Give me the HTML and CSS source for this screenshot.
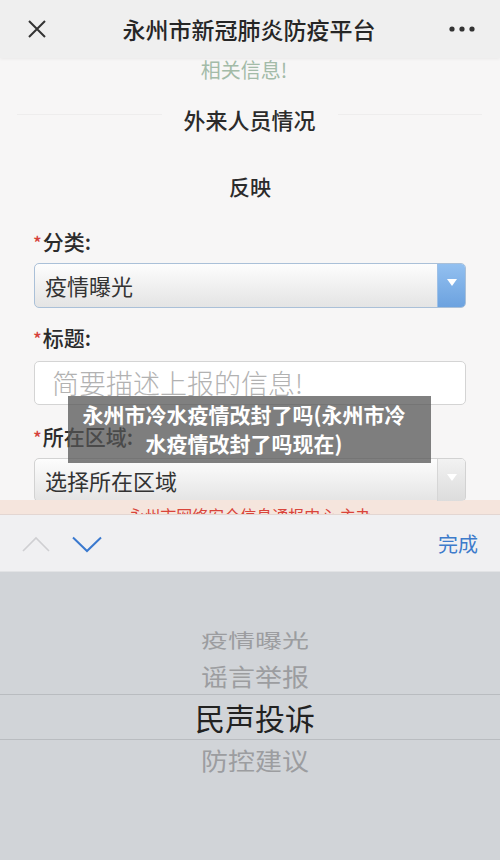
FILE: index.html
```html
<!DOCTYPE html>
<html lang="zh-CN">
<head>
    <meta charset="UTF-8">
    <meta name="viewport" content="width=device-width, initial-scale=1.0">
    <title>永州市新冠肺炎防疫平台</title>
    <link rel="stylesheet" href="styles.css">
</head>
<body>
<div class="page">
    <div class="topbar">
        <svg class="close-icon" width="20" height="20" viewBox="0 0 20 20">
            <path d="M2 2 L18 18 M18 2 L2 18" stroke="#333" stroke-width="2" fill="none"/>
        </svg>
        <div class="topbar-title">永州市新冠肺炎防疫平台</div>
        <svg class="more-icon" width="26" height="6" viewBox="0 0 26 6">
            <circle cx="3" cy="3" r="2.6" fill="#333"/>
            <circle cx="13" cy="3" r="2.6" fill="#333"/>
            <circle cx="23" cy="3" r="2.6" fill="#333"/>
        </svg>
    </div>

    <div class="content">
        <div class="notice">相关信息!</div>
        <div class="section-title"><span>外来人员情况</span></div>
        <div class="sub-title">反映</div>

        <div class="field-label"><span class="star">*</span>分类:</div>
        <div class="select select-active">
            <span class="select-text">疫情曝光</span>
            <span class="select-btn"><span class="arrow"></span></span>
        </div>

        <div class="field-label label-title"><span class="star">*</span>标题:</div>
        <div class="text-input">简要描述上报的信息!</div>

        <div class="field-label label-area"><span class="star">*</span>所在区域:</div>
        <div class="select">
            <span class="select-text">选择所在区域</span>
            <span class="select-btn"><span class="arrow"></span></span>
        </div>

        <div class="footer-note">永州市网络安全信息通报中心 主办</div>
    </div>

    <div class="toolbar">
        <div class="nav-arrows">
            <svg width="28" height="16" viewBox="0 0 28 16">
                <path d="M1 15 L14 2 L27 15" stroke="#cfcfd2" stroke-width="1.6" fill="none"/>
            </svg>
            <svg width="30" height="17" viewBox="0 0 30 17">
                <path d="M1 1.5 L15 15 L29 1.5" stroke="#3a79cf" stroke-width="2" fill="none"/>
            </svg>
        </div>
        <div class="done">完成</div>
    </div>

    <div class="picker">
        <div class="pick-item far">疫情曝光</div>
        <div class="pick-item near">谣言举报</div>
        <div class="pick-item selected">民声投诉</div>
        <div class="pick-item below">防控建议</div>
    </div>

    <div class="overlay-title">永州市冷水疫情改封了吗(永州市冷水疫情改封了吗现在)</div>
</div>
</body>
</html>
```

FILE: styles.css
```css
body {
    margin: 0;
    padding: 0;
    font-family: "Noto Sans CJK SC", "Noto Sans", sans-serif;
    background-color: #f7f6f6;
}

.page {
    position: relative;
    width: 500px;
    height: 860px;
    overflow: hidden;
}

.topbar {
    height: 58px;
    display: flex;
    align-items: center;
    justify-content: space-between;
    padding: 0 25px 0 27px;
    background-color: #efefef;
    box-shadow: 0 1px 3px rgba(0, 0, 0, 0.06);
    position: relative;
    z-index: 1;
}

.topbar-title {
    font-size: 23px;
    font-weight: 500;
    color: #262626;
    margin-left: 2px;
}

.content {
    height: 456px;
    overflow: hidden;
    background-color: #f7f6f6;
}

.notice {
    height: 24px;
    line-height: 24px;
    font-size: 20px;
    text-align: center;
    color: #a3bba8;
    margin-left: -12px;
}

.section-title {
    display: flex;
    align-items: center;
    margin: 22px 18px 0 17px;
    height: 30px;
    line-height: 30px;
    font-size: 22px;
    font-weight: 500;
    color: #2b2b2b;
}

.section-title::before,
.section-title::after {
    content: "";
    flex: 1;
    height: 1px;
    background-color: #eeeded;
    margin-top: -10px;
}

.section-title span {
    padding: 0 22px;
}

.sub-title {
    margin-top: 37px;
    height: 30px;
    line-height: 30px;
    font-size: 21px;
    font-weight: 500;
    text-align: center;
    color: #2b2b2b;
}

.field-label {
    margin: 26px 0 0 33px;
    height: 28px;
    line-height: 28px;
    font-size: 21px;
    font-weight: 500;
    color: #2b2b2b;
}

.label-title {
    margin-top: 15px;
}

.label-area {
    margin-top: 17px;
}

.star {
    color: #d6413a;
    font-size: 18px;
    margin-right: 1px;
}

.select {
    display: flex;
    margin: 8px 34px 0 34px;
    height: 44px;
    box-sizing: border-box;
    border: 1px solid #d2d2d2;
    border-radius: 5px;
    background: linear-gradient(to bottom, #fdfdfd, #e4e4e4);
    overflow: hidden;
}

.select-active {
    height: 45px;
    border-color: #aac0d8;
}

.select-text {
    flex: 1;
    line-height: 42px;
    padding-left: 10px;
    font-size: 22px;
    color: #333333;
}

.select-btn {
    width: 27px;
    display: flex;
    align-items: center;
    justify-content: center;
    border-left: 1px solid #d6d6d6;
    background: linear-gradient(to bottom, #f2f2f2, #dcdcdc);
}

.select-active .select-btn {
    border-left-color: #9ec0e6;
    background: linear-gradient(to bottom, #93c0f0, #6ca2df);
}

.arrow {
    width: 0;
    height: 0;
    border-left: 5px solid transparent;
    border-right: 5px solid transparent;
    border-top: 7px solid #ffffff;
    margin-top: -6px;
}

.text-input {
    margin: 10px 34px 0 34px;
    height: 44px;
    box-sizing: border-box;
    border: 1px solid #d4d4d4;
    border-radius: 5px;
    background-color: #ffffff;
    padding-left: 17px;
    line-height: 42px;
    font-size: 27px;
    font-weight: 300;
    color: #b2b2b2;
}

.footer-note {
    margin-top: -2px;
    height: 30px;
    line-height: 26px;
    padding-top: 2px;
    text-align: center;
    font-size: 16px;
    color: #d9443a;
    background-color: #f5e5dd;
}

.toolbar {
    height: 58px;
    box-sizing: border-box;
    display: flex;
    align-items: center;
    justify-content: space-between;
    padding: 0 22px 0 22px;
    background-color: #f0f0f2;
    border-top: 1px solid #e3d6d2;
    border-bottom: 1px solid #e2e3e5;
}

.nav-arrows {
    display: flex;
    align-items: center;
    gap: 22px;
    margin-top: 2px;
}

.done {
    font-size: 20px;
    color: #3d7bcb;
}

.picker {
    height: 288px;
    box-sizing: border-box;
    padding-top: 50px;
    background-color: #d1d4d8;
}

.pick-item {
    text-align: center;
    font-size: 27px;
    color: #9c9da0;
    margin-left: 10px;
}

.far {
    height: 36px;
    line-height: 36px;
    transform: scaleY(0.72);
}

.near {
    height: 36px;
    line-height: 36px;
    transform: scaleY(0.9);
}

.selected {
    height: 46px;
    line-height: 44px;
    font-size: 30px;
    color: #222222;
    border-top: 1px solid #b9bcc0;
    border-bottom: 1px solid #b9bcc0;
    box-sizing: border-box;
    margin-left: 0;
    padding-left: 10px;
}

.below {
    height: 40px;
    line-height: 40px;
    transform: scaleY(0.88);
}

.overlay-title {
    position: absolute;
    left: 68px;
    top: 396px;
    width: 363px;
    box-sizing: border-box;
    padding: 4px 20px 5px 9px;
    background-color: rgba(85, 85, 85, 0.75);
    color: #ffffff;
    font-size: 21px;
    font-weight: 700;
    line-height: 29px;
    text-align: center;
}
```
